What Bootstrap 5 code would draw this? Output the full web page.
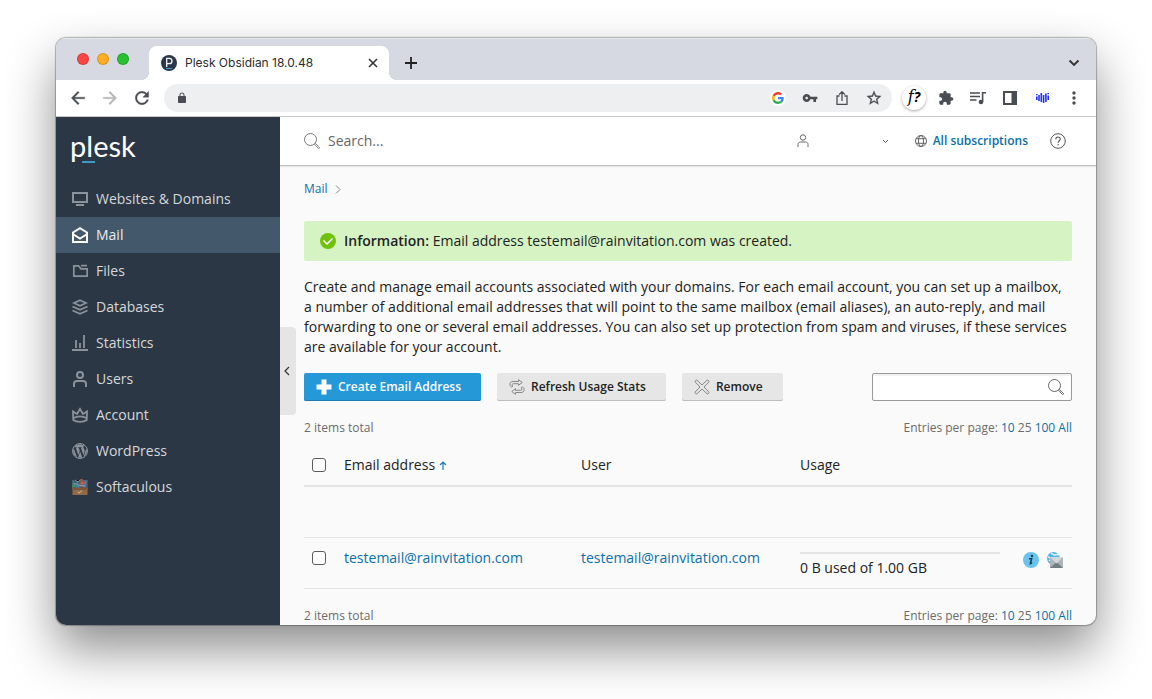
<!DOCTYPE html>
<html lang="en">
<head>
<meta charset="utf-8">
<meta name="viewport" content="width=device-width, initial-scale=1">
<title>Plesk Obsidian 18.0.48</title>
<link href="https://cdn.jsdelivr.net/npm/bootstrap@5.3.0/dist/css/bootstrap.min.css" rel="stylesheet">
<style>
  :root { --ink: #222; --link: #0b6fa8; --navy: #2c3746; --chrome: #4a4d52; }
  body { font-family: "Open Sans", "Noto Sans", sans-serif; font-size: 14px; line-height: 20px; color: var(--ink); background: #fff; }
  a { color: var(--link); text-decoration: none; }
  svg { display: block; flex: none; }
  .desk { min-height: 100vh; padding: 38px 56px 74px; overflow: hidden; }
  .win { border-radius: 10px; background: #fafafa; box-shadow: 0 0 1px 1px rgba(0,0,0,.28), 0 24px 50px rgba(0,0,0,.45); overflow: hidden; }

  /* browser frame */
  .tabstrip { height: 42px; background: #d6d9e1; box-shadow: inset 0 1px #e8eaee; padding: 8px 6px 0 21px; }
  .light { width: 12px; height: 12px; border-radius: 50%; border: 1px solid rgba(0,0,0,.14); }
  .lights { padding-bottom: 8px; margin-right: 20px; }
  .tab-on { width: 240px; height: 34px; background: #fff; border-radius: 8px 8px 0 0; padding: 0 8px 0 12px; font-family: Inter, sans-serif; font-size: 12px; position: relative; color: #2a2c30; }
  .tab-on::before, .tab-on::after { content: ""; position: absolute; bottom: 0; width: 8px; height: 8px; }
  .tab-on::before { right: 100%; background: radial-gradient(circle at 0 0, transparent 8px, #fff 8px); }
  .tab-on::after { left: 100%; background: radial-gradient(circle at 100% 0, transparent 8px, #fff 8px); }
  .favicon { width: 16px; height: 16px; }
  .plain { border: 0; background: none; padding: 0; color: inherit; display: flex; align-items: center; justify-content: center; }
  .tool { width: 32px; height: 28px; color: var(--chrome); }
  .toolbar { height: 37px; background: #fff; border-bottom: 1px solid #c9cacc; padding: 0 6px; }
  .omni { height: 28px; border-radius: 14px; background: #eeeff1; margin: 0 6px; padding: 0 2px; }
  .bare { border: 0; background: transparent; outline: 0; min-width: 0; padding: 0; }
  .fq { width: 24px; height: 24px; border-radius: 50%; background: #fff; box-shadow: 0 1px 3px rgba(0,0,0,.35); color: #000; font: italic bold 16px/22px "DejaVu Serif", serif; }
  .fq b { font: italic bold 14px/22px "Open Sans", sans-serif; }

  /* panel sidebar */
  .side { width: 224px; background: var(--navy); }
  .logo { font: 400 29px/30px Lato, sans-serif; color: #fff; padding: 14px 14px 20px; }
  .logo u { text-decoration: none; position: relative; }
  .logo u::after { content: ""; position: absolute; left: -4px; bottom: 0; width: 13px; height: 2px; background: #3a9cc4; }
  .side .nav-link { color: #d5d7da; height: 36px; padding: 0 16px; border-radius: 0; gap: 8px; }
  .side .nav-link svg { color: #8b929b; }
  .side .nav-link.active { background: #43586b; color: #e8ebed; }
  .side .nav-link.active svg { color: #fff; }
  .collapser { position: absolute; left: 0; top: 50%; transform: translateY(-50%); width: 16px; height: 88px; padding-right: 2px; background: #e5e5e5; border-radius: 0 4px 4px 0; color: #333; }

  /* panel content */
  .topbar { height: 49px; background: #fff; border-bottom: 1px solid #bfbfbf; box-shadow: 0 1px 1px rgba(0,0,0,.07); padding: 0 30px 0 24px; color: #777; }
  .topbar .bare { color: #666; font-size: 14px; }
  .topbar .bare::placeholder { color: #666; opacity: 1; }
  .user { width: 92px; }
  .subs { font-size: 12px; font-weight: 600; gap: 6px; margin: 0 22px 0 26px; }
  .subs svg { color: #666; }
  .content { padding: 13px 24px 0; }
  .crumb { font-size: 12px; gap: 6px; margin-bottom: 22px; }
  .notice { background: #d6f3c4; border-radius: 2px; padding: 10px 16px; gap: 8px; margin-bottom: 16px; }
  .intro { margin-bottom: 16px; }
  .act { height: 28px; border: 0; border-radius: 2px; background: #e6e6e6; box-shadow: inset 0 -1px #bdbdbd; color: var(--ink); font-size: 12px; line-height: 20px; font-weight: 600; padding: 0 20px 0 12px; gap: 6px; display: flex; align-items: center; }
  .act svg { color: #888; }
  .act-main { background: #2598d8; box-shadow: inset 0 -1px #1b7bb3; color: #fff; }
  .act-main svg { color: #fff; }
  .filter { width: 200px; height: 28px; border: 1px solid #9a9a9a; border-radius: 2px; background: #fff; box-shadow: inset 0 2px 1px #f0f0f0; padding: 0 7px; color: #666; }
  .totals { font-size: 12px; line-height: 18px; margin-top: 18px; color: #6b6b6b; }
  .grid { --bs-table-bg: transparent; margin: 8px 0 0; table-layout: fixed; color: var(--ink); border-color: #e4e4e4; }
  .grid > :not(caption) > * > * { padding: 10px 0; border-bottom: 1px solid #e4e4e4; }
  .grid > thead > tr > th { font-weight: 400; border-bottom-width: 2px; }
  .grid .form-check-input { display: block; width: 14px; height: 14px; margin: 3px 8px; border: 1px solid #5c5c5c; border-radius: 3px; }
  .blank td { height: 51px; }
  .c-check { width: 40px; } .c-mail { width: 237px; } .c-user { width: 219px; } .c-tools { width: 49px; }
  .usage { width: 200px; height: 2px; border-radius: 0; background: #e4e4e4; margin: 4px 0; }
</style>
</head>
<body>
<div class="desk">
<div class="win">
  <div class="tabstrip d-flex align-items-center">
    <div class="lights d-flex gap-2">
      <span class="light" style="background:#fc4646"></span><span class="light" style="background:#fdae24"></span><span class="light" style="background:#28c131"></span>
    </div>
    <div class="tab-on d-flex align-items-center gap-2">
      <svg class="favicon" viewBox="0 0 16 16"><circle cx="8" cy="8" r="8" fill="#2b3849"/><path d="M5.700 12V3.300h2.600a2.700 2.700 0 0 1 0 5.400H5.800" fill="none" stroke="#f4f7fa" stroke-width="1.300"/><path d="M5 13.500h6" stroke="#3d9bd6"/></svg>
      <span class="flex-grow-1 text-nowrap">Plesk Obsidian 18.0.48</span>
      <button class="plain favicon" type="button" aria-label="Close tab"><svg width="10" height="10" viewBox="0 0 10 10" stroke="#333" stroke-width="1.600"><path d="M1 1l8 8M9 1L1 9"/></svg></button>
    </div>
    <button class="plain tool ms-2 me-auto mb-2 pt-2" type="button" aria-label="New tab" style="width:28px"><svg width="12" height="12" viewBox="0 0 12 12" stroke="#222" stroke-width="1.800"><path d="M6 0v12M0 6h12"/></svg></button>
    <button class="plain tool mb-2 pt-2" type="button" aria-label="Search tabs"><svg width="12" height="8" viewBox="0 0 12 8" fill="none" stroke="#333" stroke-width="1.900"><path d="M1.500 1.500L6 6l4.500-4.500"/></svg></button>
  </div>

  <div class="toolbar d-flex align-items-center">
    <button class="plain tool" type="button" aria-label="Back"><svg width="20" height="20" viewBox="0 0 24 24" fill="currentColor" stroke="currentColor" stroke-width=".4"><path d="M20 11H7.830l5.590-5.590L12 4l-8 8 8 8 1.410-1.410L7.830 13H20z"/></svg></button>
    <button class="plain tool" type="button" aria-label="Forward"><svg width="20" height="20" viewBox="0 0 24 24" fill="#b4b5b8" stroke="#b4b5b8" stroke-width=".4"><path d="M4 11h12.170l-5.590-5.590L12 4l8 8-8 8-1.410-1.410L16.170 13H4z"/></svg></button>
    <button class="plain tool" type="button" aria-label="Reload"><svg width="20" height="20" viewBox="0 0 24 24" fill="currentColor" stroke="currentColor" stroke-width=".4"><path d="M17.650 6.350C16.200 4.900 14.210 4 12 4c-4.420 0-7.990 3.580-7.990 8s3.570 8 7.990 8c3.730 0 6.840-2.550 7.730-6h-2.080c-.82 2.330-3.040 4-5.650 4-3.310 0-6-2.690-6-6s2.690-6 6-6c1.660 0 3.140.69 4.220 1.780L13 11h7V4z"/></svg></button>
    <div class="omni d-flex align-items-center flex-grow-1">
      <span class="plain tool"><svg width="12" height="12" viewBox="0 0 24 24" fill="currentColor"><path d="M18 8h-1V6c0-2.760-2.240-5-5-5S7 3.240 7 6v2H6c-1.100 0-2 .9-2 2v10c0 1.100.9 2 2 2h12c1.100 0 2-.9 2-2V10c0-1.100-.9-2-2-2zM9 6c0-1.660 1.340-3 3-3s3 1.340 3 3v2H9z"/></svg></span>
      <input class="bare flex-grow-1" type="text" aria-label="Address">
      <button class="plain tool" type="button" aria-label="Google"><svg width="16" height="16" viewBox="-8 -8 64 64"><circle cx="24" cy="24" r="32" fill="#fff"/><path fill="#EA4335" d="M24 9.500c3.540 0 6.710 1.220 9.210 3.600l6.850-6.850C35.900 2.380 30.470 0 24 0 14.620 0 6.510 5.380 2.560 13.220l7.980 6.190C12.430 13.720 17.740 9.500 24 9.500z"/><path fill="#4285F4" d="M46.980 24.550c0-1.570-.15-3.090-.38-4.550H24v9.020h12.940c-.58 2.960-2.260 5.480-4.780 7.180l7.730 6c4.510-4.180 7.090-10.360 7.090-17.650z"/><path fill="#FBBC05" d="M10.530 28.590c-.48-1.450-.76-2.990-.76-4.590s.27-3.140.76-4.590l-7.980-6.190C.92 16.460 0 20.120 0 24s.92 7.540 2.560 10.780z"/><path fill="#34A853" d="M24 48c6.480 0 11.930-2.130 15.890-5.810l-7.730-6c-2.150 1.450-4.920 2.300-8.160 2.300-6.260 0-11.570-4.220-13.470-9.910l-7.980 6.190C6.510 42.620 14.620 48 24 48z"/></svg></button>
      <button class="plain tool" type="button" aria-label="Passwords"><svg width="16" height="16" viewBox="0 0 24 24" fill="currentColor"><path d="M12.650 10C11.830 7.670 9.610 6 7 6c-3.310 0-6 2.690-6 6s2.690 6 6 6c2.610 0 4.830-1.670 5.650-4H17v4h4v-4h2v-4zM7 14c-1.100 0-2-.9-2-2s.9-2 2-2 2 .9 2 2-.9 2-2 2z"/></svg></button>
      <button class="plain tool" type="button" aria-label="Share"><svg width="14" height="16" viewBox="0 0 14 16" fill="none" stroke="currentColor" stroke-width="1.300"><path d="M4.500 6H2v8.300h10V6H9.500M7 11V2M4 4.600l3-3 3 3"/></svg></button>
      <button class="plain tool" type="button" aria-label="Bookmark"><svg width="16" height="16" viewBox="1 1 22 22" fill="currentColor" stroke="currentColor" stroke-width=".3"><path d="M22 9.240l-7.190-.62L12 2 9.190 8.630 2 9.240l5.460 4.730L5.820 21 12 17.270 18.180 21l-1.630-7.030zM12 15.400l-3.760 2.270 1-4.280-3.320-2.880 4.380-.38L12 6.100l1.710 4.040 4.380.38-3.320 2.880 1 4.280z"/></svg></button>
    </div>
    <button class="plain tool" type="button" aria-label="Font finder"><span class="fq"><span class="fw-normal">f</span><b>?</b></span></button>
    <button class="plain tool" type="button" aria-label="Extensions"><svg width="16" height="16" viewBox="0 0 24 24" fill="currentColor"><path d="M20.500 11H19V7c0-1.100-.9-2-2-2h-4V3.500C13 2.120 11.880 1 10.500 1S8 2.120 8 3.500V5H4c-1.100 0-1.990.9-1.990 2v3.800H3.500c1.490 0 2.700 1.210 2.700 2.700s-1.210 2.700-2.700 2.700H2V20c0 1.100.9 2 2 2h3.800v-1.500c0-1.490 1.210-2.700 2.700-2.700s2.700 1.210 2.700 2.700V22H17c1.100 0 2-.9 2-2v-4h1.500c1.380 0 2.500-1.120 2.500-2.500S21.880 11 20.500 11z"/></svg></button>
    <button class="plain tool" type="button" aria-label="Media"><svg width="16" height="14" viewBox="0 0 16 14"><path d="M0 2h10M0 5.500h10M0 9h6.500M12.600 11V1.800h3.400" stroke="currentColor" stroke-width="1.600" fill="none"/><circle cx="11" cy="11" r="2.300" fill="currentColor"/></svg></button>
    <button class="plain tool" type="button" aria-label="Side panel"><svg width="14" height="14" viewBox="0 0 14 14"><path d="M1 1h12v12H1z" fill="none" stroke="currentColor" stroke-width="2"/><path d="M8.500 1H13v12H8.500z" fill="currentColor"/></svg></button>
    <button class="plain tool" type="button" aria-label="Audio extension"><svg width="13" height="12" viewBox="0 0 13 12" stroke="#2030f0" stroke-width="1.600"><path d="M.8 2v1.200M.8 4.500v3.500M3 3v6M5.300 1v9M7.600 3v8M9.900 1.500v8.500M12.200 1v1.200M12.200 3.500V8"/></svg></button>
    <button class="plain tool" type="button" aria-label="Menu"><svg width="4" height="14" viewBox="0 0 4 14" fill="currentColor"><circle cx="2" cy="2" r="1.700"/><circle cx="2" cy="7" r="1.700"/><circle cx="2" cy="12" r="1.700"/></svg></button>
  </div>

  <div class="d-flex">
    <aside class="side flex-shrink-0">
      <div class="logo">p<u>l</u>esk</div>
      <nav class="nav flex-column">
        <a class="nav-link d-flex align-items-center" href="#"><svg width="16" height="16" viewBox="0 0 16 16" fill="none" stroke="currentColor" stroke-width="2"><path d="M1 2h14v9H1z"/><path d="M4 14h8"/></svg>Websites &amp; Domains</a>
        <a class="nav-link active d-flex align-items-center" href="#" aria-current="page"><svg width="16" height="16" viewBox="0 0 16 16" fill="none" stroke="currentColor" stroke-width="2"><path d="M1 15V5.500L8 1.200l7 4.300V15z"/><path d="M1.500 7.500L8 11.500l6.500-4"/></svg>Mail</a>
        <a class="nav-link d-flex align-items-center" href="#"><svg width="16" height="16" viewBox="0 0 16 16" fill="none" stroke="currentColor" stroke-width="1.700"><path d="M1.800 2.800h4.700l2.500 3h6.200v7.400H1.800zM9 2.600h6"/></svg>Files</a>
        <a class="nav-link d-flex align-items-center" href="#"><svg width="16" height="16" viewBox="0 0 16 16" fill="none" stroke="currentColor" stroke-width="1.800"><path d="M8 1.200L14 4 8 6.800 2 4zM.5 7.500L8 10.800l7.500-3.300M.5 11.500L8 14.800l7.500-3.300"/></svg>Databases</a>
        <a class="nav-link d-flex align-items-center" href="#"><svg width="16" height="16" viewBox="0 0 16 16" fill="none" stroke="currentColor" stroke-width="1.800"><path d="M0 15h16M4 5v8M8 8v5M12 0v13"/></svg>Statistics</a>
        <a class="nav-link d-flex align-items-center" href="#"><svg width="16" height="16" viewBox="0 0 16 16" fill="none" stroke="currentColor" stroke-width="2"><circle cx="8" cy="4" r="3"/><path d="M2 16v-3c0-1.800 1.200-3 3-3h6c1.800 0 3 1.200 3 3v3"/></svg>Users</a>
        <a class="nav-link d-flex align-items-center" href="#"><svg width="16" height="16" viewBox="0 0 16 16" fill="none" stroke="currentColor" stroke-width="1.800"><path d="M1.300 13L1 4.500l4 2.500 3-5 3 5 4-2.500-.3 8.500c-3 2.500-10.400 2.500-13.400 0zM1.400 11c4-2 9.200-2 13.200 0"/></svg>Account</a>
        <a class="nav-link d-flex align-items-center" href="#"><svg width="16" height="16" viewBox="0 0 16 16" fill="currentColor"><circle cx="8" cy="8" r="7.500" fill="none" stroke="currentColor"/><path d="M12.633 7.653c0-.848-.305-1.435-.566-1.892l-.08-.13c-.317-.51-.594-.958-.594-1.480 0-.63.478-1.218 1.152-1.218l.089.006A6.838 6.838 0 0 0 8 1.137 6.855 6.855 0 0 0 2.266 4.230c.16.005.313.009.442.009.717 0 1.828-.087 1.828-.087.37-.022.414.521.044.565 0 0-.371.044-.785.065l2.500 7.434 1.500-4.506-1.070-2.929c-.369-.022-.719-.065-.719-.065-.37-.022-.326-.588.043-.566 0 0 1.134.087 1.808.087.718 0 1.830-.087 1.830-.087.37-.022.413.522.043.566 0 0-.372.043-.785.065l2.480 7.377.684-2.287.054-.173c.27-.86.469-1.495.469-2.046zM1.137 8a6.864 6.864 0 0 0 3.868 6.176L1.730 5.206A6.837 6.837 0 0 0 1.137 8zM6.061 14.583L8.121 8.600l2.109 5.780c.014.033.03.064.049.094a6.854 6.854 0 0 1-4.218.109zm7.960-9.876c.03.219.047.453.047.706 0 .696-.13 1.479-.522 2.458l-2.096 6.060a6.860 6.860 0 0 0 2.572-9.224z"/></svg>WordPress</a>
        <a class="nav-link d-flex align-items-center" href="#"><svg width="16" height="16" viewBox="0 0 16 16"><path d="M0 1h16v8H0z" fill="#3b5870"/><path d="M0 9L1 1l4 7z" fill="#3f8a68"/><path d="M5 1l3 8H4z" fill="#3d7fb0"/><path d="M8 0h3v8H7z" fill="#8a5a50"/><path d="M11 1.500h4l-1 7h-3z" fill="#4a79a5"/><path d="M3 1l3 2 2-2M2 5h4M9 4h5M6 6l7 1" stroke="#9fb0b8" stroke-width=".8"/><circle cx="12" cy="3.500" r="1.500" fill="#b0563c"/><path d="M0 8.500h16V11H0z" fill="#7d5737"/><path d="M.5 11h15v5H.5z" fill="#916a45"/><path d="M5.500 12.800l1.500 1.400 3-2.600" fill="none" stroke="#d3bfa6"/></svg>Softaculous</a>
      </nav>
    </aside>

    <main class="flex-grow-1 position-relative">
      <header class="topbar d-flex align-items-center">
        <label for="q" class="me-2"><svg width="16" height="16" viewBox="0 0 16 16" fill="none" stroke="currentColor"><circle cx="6.500" cy="6.500" r="6"/><path d="M10.500 11.200l.9-.8 4 3.900c.5.8-.4 1.600-1.100 1.100z" stroke-width=".9"/></svg></label>
        <input id="q" class="bare flex-grow-1" type="search" placeholder="Search...">
        <button class="plain user justify-content-between" type="button" aria-label="Account menu">
          <svg width="12" height="14" viewBox="0 0 12 14" fill="none" stroke="#666"><circle cx="6" cy="3.500" r="2.700"/><path d="M1 13v-2.500c0-1.500 1-2.500 2.500-2.500h5C10 8 11 9 11 10.500V13"/></svg>
          <svg width="7" height="5" viewBox="0 0 7 5" fill="none" stroke="#555"><path d="M1 1l2.500 2.500L6 1"/></svg>
        </button>
        <a class="subs d-flex align-items-center text-nowrap" href="#"><svg width="12" height="12" viewBox="0 0 12 12" fill="none" stroke="currentColor"><circle cx="6" cy="6" r="5.500"/><ellipse cx="6" cy="6" rx="2.500" ry="5.500"/><path d="M1 3.700h10M1 8.300h10"/></svg>All subscriptions</a>
        <button class="plain" type="button" aria-label="Help"><svg width="16" height="16" viewBox="0 0 16 16" fill="none" stroke="#555"><circle cx="8" cy="8" r="7.300"/><path d="M5.800 6.300c0-3 4.500-2.900 4.500-.2 0 1.600-2.200 1.700-2.200 3.600M8.100 11v1.200" stroke-width="1.100"/></svg></button>
      </header>
      <button class="plain collapser" type="button" aria-label="Collapse sidebar"><svg width="6" height="10" viewBox="0 0 6 10" fill="none" stroke="currentColor" stroke-width="1.200"><path d="M5 1L1 5l4 4"/></svg></button>

      <div class="content">
        <nav class="crumb d-flex align-items-center" aria-label="Breadcrumb"><a href="#">Mail</a><svg width="7" height="9" viewBox="0 0 7 9" fill="none" stroke="#888"><path d="M2 .5l4 4-4 4"/></svg></nav>
        <div class="notice d-flex align-items-center" role="status">
          <svg width="16" height="16" viewBox="0 0 16 16"><circle cx="8" cy="8" r="8" fill="#70c10c"/><path d="M3.500 7.500l3.500 3.500 5.500-5.500" fill="none" stroke="#fff" stroke-width="1.500"/></svg>
          <span><span class="fw-semibold">Information:</span> Email address testemail@rainvitation.com was created.</span>
        </div>
        <p class="intro">Create and manage email accounts associated with your domains. For each email account, you can set up a mailbox, a number of additional email addresses that will point to the same mailbox (email aliases), an auto-reply, and mail forwarding to one or several email addresses. You can also set up protection from spam and viruses, if these services are available for your account.</p>

        <div class="d-flex gap-3">
          <button class="act act-main" type="button"><svg width="16" height="16" viewBox="0 0 16 16" fill="currentColor"><path d="M5.500.5h5v5h5v5h-5v5h-5v-5h-5v-5h5z"/></svg>Create Email Address</button>
          <button class="act" type="button"><svg width="16" height="16" viewBox="0 0 16 16" fill="none" stroke="currentColor" stroke-width="1"><path d="M2.300 8C0 6.500.3 2.500 4 2.500h5.500V.7L13.200 3.500 9.500 6.300V4.700H4.500C2.500 4.700 2.600 6.500 4 7zM13.700 8c2.300 1.500 2 5.500-1.700 5.500H6.500v1.800L2.800 12.500l3.700-2.800v1.600h5c2 0 1.900-1.800.5-2.300z"/></svg>Refresh Usage Stats</button>
          <button class="act" type="button"><svg width="16" height="16" viewBox="0 0 16 16" fill="none" stroke="currentColor" stroke-width="1"><path d="M3 1.200L8 6l5-4.800c1-.6 2.400.8 1.800 1.800L10 8l4.800 5c.6 1-.8 2.400-1.800 1.800L8 10l-5 4.800c-1 .6-2.400-.8-1.800-1.800L6 8 1.200 3C.6 2 2 .6 3 1.200z"/></svg>Remove</button>
          <div class="filter d-flex align-items-center ms-auto">
            <input class="bare flex-grow-1" type="search" aria-label="Filter email addresses">
            <button class="plain" type="button" aria-label="Search"><svg width="16" height="16" viewBox="0 0 16 16" fill="none" stroke="currentColor"><circle cx="6.500" cy="6.500" r="6"/><path d="M10.500 11.200l.9-.8 4 3.900c.5.8-.4 1.600-1.100 1.100z"/></svg></button>
          </div>
        </div>

        <div class="totals d-flex justify-content-between"><span>2 items total</span><span>Entries per page: <a href="#">10</a> 25 <a href="#">100</a> <a href="#">All</a></span></div>

        <table class="table grid">
          <thead>
            <tr><th class="c-check"><input class="form-check-input" type="checkbox" aria-label="Select all"></th><th class="c-mail"><span class="d-flex align-items-center gap-1">Email address <svg width="8" height="9" viewBox="0 0 8 9" fill="none" stroke="#1b7bb3" stroke-width="1.200"><path d="M4 9V1M1 4l3-3 3 3"/></svg></span></th><th class="c-user">User</th><th>Usage</th><th class="c-tools"></th></tr>
          </thead>
          <tbody>
            <tr class="blank"><td></td><td></td><td></td><td></td><td></td></tr>
            <tr>
              <td><input class="form-check-input" type="checkbox" aria-label="Select testemail@rainvitation.com"></td>
              <td><a href="#">testemail@rainvitation.com</a></td>
              <td><a href="#">testemail@rainvitation.com</a></td>
              <td><div class="progress usage" role="progressbar" aria-label="Mailbox usage" aria-valuenow="0" aria-valuemin="0" aria-valuemax="100"><div class="progress-bar" style="width:0%"></div></div>0 B used of 1.00 GB</td>
              <td><div class="d-flex gap-2 py-1">
                <a href="#" aria-label="Details"><svg width="16" height="16" viewBox="0 0 16 16"><circle cx="8" cy="8" r="8" fill="#69c3ec"/><circle cx="8.900" cy="4" r="1.200" fill="#173f5c"/><path d="M6 6.700h2.600l-1.200 4.800 1.800-.5" fill="none" stroke="#173f5c" stroke-width="1.600"/></svg></a>
                <a href="#" aria-label="Open webmail"><svg width="16" height="16" viewBox="0 0 16 16"><circle cx="6.500" cy="6.500" r="6.500" fill="#55b4e3"/><path d="M1 4.500l4 3M4 1l3 2 5-.5M2 8l3 2" stroke="#e8f6fd" stroke-width="1.500" fill="none"/><path d="M3 5h13v11H3z" fill="#aeb4b8"/><path d="M3 16l6.500-6 6.500 6z" fill="#727c83"/><path d="M3 5h13l-6.500 6.500z" fill="#d3d7da"/></svg></a>
              </div></td>
            </tr>
          </tbody>
        </table>

        <div class="totals d-flex justify-content-between"><span>2 items total</span><span>Entries per page: <a href="#">10</a> 25 <a href="#">100</a> <a href="#">All</a></span></div>
      </div>
    </main>
  </div>
</div>
</div>
<script src="https://cdn.jsdelivr.net/npm/bootstrap@5.3.0/dist/js/bootstrap.bundle.min.js"></script>
</body>
</html>
